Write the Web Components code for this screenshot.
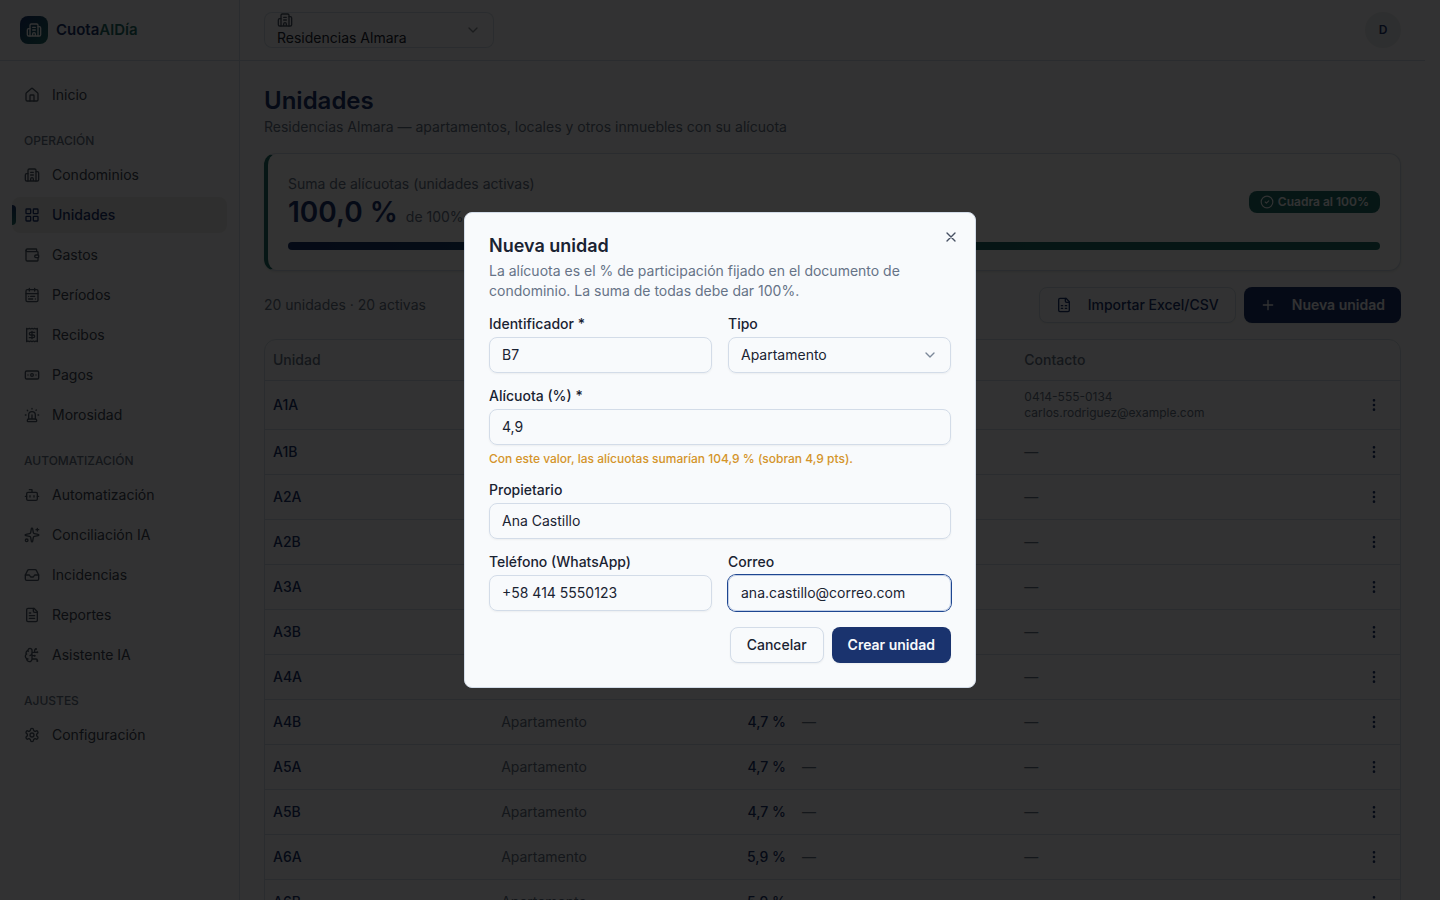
<!DOCTYPE html>
<html lang="es">
<head>
<meta charset="utf-8">
<meta name="viewport" content="width=device-width, initial-scale=1">
<title>CuotaAlDía · Unidades</title>
<style>
  :root {
    --bg: #fafbfc;
    --surface: #f8fafc;
    --ink: #1a2332;
    --muted: #667387;
    --line: #d3dce8;
    --navy: #1a336e;
    --teal: #1f6f69;
    --amber: #d4942a;
  }
  * { box-sizing: border-box; }
  html { background: var(--bg); }
  body {
    margin: 0;
    height: 100vh;
    overflow: hidden;
    font: 14px/20px Inter, "Noto Sans", sans-serif;
    color: var(--ink);
  }
</style>
</head>
<body>
<app-shell>
  <app-sidebar slot="sidebar"></app-sidebar>
  <app-topbar slot="topbar"></app-topbar>
  <units-page></units-page>
</app-shell>
<unit-dialog></unit-dialog>

<script>
const ICONS = {
  building: '<path d="M10 12h4M10 8h4M14 21v-3a2 2 0 0 0-4 0v3M6 10H4a2 2 0 0 0-2 2v7a2 2 0 0 0 2 2h16a2 2 0 0 0 2-2V9a2 2 0 0 0-2-2h-2"/><path d="M6 21V5a2 2 0 0 1 2-2h8a2 2 0 0 1 2 2v16"/>',
  home: '<path d="M15 21v-8a1 1 0 0 0-1-1h-4a1 1 0 0 0-1 1v8"/><path d="M3 10a2 2 0 0 1 .7-1.5l7-6a2 2 0 0 1 2.6 0l7 6A2 2 0 0 1 21 10v9a2 2 0 0 1-2 2H5a2 2 0 0 1-2-2z"/>',
  grid: '<rect x="3" y="3" width="7" height="7" rx="1"/><rect x="14" y="3" width="7" height="7" rx="1"/><rect x="14" y="14" width="7" height="7" rx="1"/><rect x="3" y="14" width="7" height="7" rx="1"/>',
  wallet: '<path d="M19 7V4a1 1 0 0 0-1-1H5a2 2 0 0 0 0 4h15a1 1 0 0 1 1 1v4h-3a2 2 0 0 0 0 4h3a1 1 0 0 0 1-1v-2a1 1 0 0 0-1-1"/><path d="M3 5v14a2 2 0 0 0 2 2h15a1 1 0 0 0 1-1v-4"/>',
  calendar: '<path d="M8 2v4M16 2v4M3 10h18M16 14h-6M13 18H7M7 14h.01M17 18h.01"/><rect x="3" y="4" width="18" height="18" rx="2"/>',
  receipt: '<path d="M4 2v20l2-1 2 1 2-1 2 1 2-1 2 1 2-1 2 1V2l-2 1-2-1-2 1-2-1-2 1-2-1-2 1Z"/><path d="M16 8h-6a2 2 0 1 0 0 4h4a2 2 0 1 1 0 4H8M12 17.500V6.500"/>',
  banknote: '<rect x="2" y="6" width="20" height="12" rx="2"/><circle cx="12" cy="12" r="2"/><path d="M6 12h.01M18 12h.01"/>',
  siren: '<path d="M7 18v-6a5 5 0 1 1 10 0v6"/><path d="M5 21a1 1 0 0 0 1 1h12a1 1 0 0 0 1-1v-1a2 2 0 0 0-2-2H7a2 2 0 0 0-2 2zM21 12h1M18.500 4.500 18 5M2 12h1M12 2v1M4.900 4.900l.7.7M12 12v6"/>',
  bot: '<path d="M12 8V4H8"/><rect x="4" y="8" width="16" height="12" rx="2"/><path d="M2 14h2M20 14h2M15 13v2M9 13v2"/>',
  sparkles: '<path d="M11 2.800a1 1 0 0 1 2 0l1 5.600a2 2 0 0 0 1.600 1.600l5.600 1a1 1 0 0 1 0 2l-5.600 1a2 2 0 0 0-1.600 1.600l-1 5.600a1 1 0 0 1-2 0l-1-5.600a2 2 0 0 0-1.600-1.600l-5.600-1a1 1 0 0 1 0-2l5.600-1A2 2 0 0 0 10 8.400zM20 2v4M22 4h-4"/><circle cx="4" cy="20" r="2"/>',
  inbox: '<path d="M22 12h-6l-2 3h-4l-2-3H2"/><path d="M5.450 5.110 2 12v6a2 2 0 0 0 2 2h16a2 2 0 0 0 2-2v-6l-3.450-6.890A2 2 0 0 0 16.760 4H7.240a2 2 0 0 0-1.790 1.110z"/>',
  file: '<path d="M15 2H6a2 2 0 0 0-2 2v16a2 2 0 0 0 2 2h12a2 2 0 0 0 2-2V7z"/><path d="M14 2v4a2 2 0 0 0 2 2h4M10 9H8M16 13H8M16 17H8"/>',
  brain: '<path d="M12 5a3 3 0 1 0-5.997.125 4 4 0 0 0-2.526 5.770 4 4 0 0 0 .556 6.588A4 4 0 1 0 12 18ZM9 13a4.500 4.500 0 0 0 3-4M6.003 5.125A3 3 0 0 0 6.401 6.500M3.477 10.896a4 4 0 0 1 .585-.396M6 18a4 4 0 0 1-1.967-.516M12 13h4M12 18h6a2 2 0 0 1 2 2v1M12 8h8M16 8V5a2 2 0 0 1 2-2"/><circle cx="16" cy="13" r=".5"/><circle cx="18" cy="3" r=".5"/><circle cx="20" cy="21" r=".5"/><circle cx="20" cy="8" r=".5"/>',
  settings: '<path d="M12.220 2h-.44a2 2 0 0 0-2 2v.18a2 2 0 0 1-1 1.730l-.43.25a2 2 0 0 1-2 0l-.15-.08a2 2 0 0 0-2.730.73l-.22.38a2 2 0 0 0 .73 2.730l.15.1a2 2 0 0 1 1 1.720v.51a2 2 0 0 1-1 1.740l-.15.09a2 2 0 0 0-.73 2.730l.22.38a2 2 0 0 0 2.730.73l.15-.08a2 2 0 0 1 2 0l.43.25a2 2 0 0 1 1 1.730V20a2 2 0 0 0 2 2h.44a2 2 0 0 0 2-2v-.18a2 2 0 0 1 1-1.730l.43-.25a2 2 0 0 1 2 0l.15.08a2 2 0 0 0 2.730-.73l.22-.39a2 2 0 0 0-.73-2.730l-.15-.08a2 2 0 0 1-1-1.740v-.5a2 2 0 0 1 1-1.740l.15-.09a2 2 0 0 0 .73-2.730l-.22-.38a2 2 0 0 0-2.730-.73l-.15.08a2 2 0 0 1-2 0l-.43-.25a2 2 0 0 1-1-1.730V4a2 2 0 0 0-2-2z"/><circle cx="12" cy="12" r="3"/>',
  sheet: '<path d="M15 2H6a2 2 0 0 0-2 2v16a2 2 0 0 0 2 2h12a2 2 0 0 0 2-2V7z"/><path d="M14 2v4a2 2 0 0 0 2 2h4M8 13h2M14 13h2M8 17h2M14 17h2"/>',
  plus: '<path d="M5 12h14M12 5v14"/>',
  check: '<circle cx="12" cy="12" r="10"/><path d="m9 12 2 2 4-4"/>',
  chevron: '<path d="m6 9 6 6 6-6"/>',
  close: '<path d="M18 6 6 18M6 6l12 12"/>',
  dots: '<circle cx="12" cy="12" r="1"/><circle cx="12" cy="5" r="1"/><circle cx="12" cy="19" r="1"/>'
};

const RESET = '*, *::before { box-sizing: border-box; } button, input, select { font: inherit; color: inherit; margin: 0; } h1, h2, p { margin: 0; }';

class Base extends HTMLElement {
  connectedCallback() {
    if (this.shadowRoot) return;
    this.attachShadow({ mode: 'open' }).innerHTML = `<style>${RESET}${this.styles()}</style>${this.markup()}`;
  }
  attr(name) { return this.getAttribute(name) || ''; }
}

customElements.define('ui-icon', class extends Base {
  styles() {
    return `:host { display: block; flex: none; width: 16px; height: 16px; }
      svg { display: block; width: 100%; height: 100%; fill: none; stroke: currentColor; stroke-width: 2; stroke-linecap: round; stroke-linejoin: round; }`;
  }
  markup() {
    return `<svg viewBox="0 0 24 24" aria-hidden="true">${ICONS[this.attr('name')]}</svg>`;
  }
});

customElements.define('ui-button', class extends Base {
  styles() {
    return `:host { display: block; }
      button { display: flex; align-items: center; gap: 16px; height: 36px; padding: 0 16px; border: 1px solid var(--line);
        border-radius: 8px; background: var(--surface); font-weight: 500; white-space: nowrap; box-shadow: 0 1px 2px rgb(0 0 0 / 5%); }
      :host([primary]) button { border: 0; background: var(--navy); color: #f8fafc; font-weight: 600; }`;
  }
  markup() {
    return `<button type="button"><slot name="icon"></slot><slot></slot></button>`;
  }
});

customElements.define('app-shell', class extends Base {
  styles() {
    return `:host { display: grid; grid-template-columns: 240px minmax(0, 1fr); min-height: 100vh; padding-right: 15px; }
      .side { border-right: 1px solid var(--line); }`;
  }
  markup() {
    return `<div class="side"><slot name="sidebar"></slot></div>
      <div><slot name="topbar"></slot><main><slot></slot></main></div>`;
  }
});

customElements.define('nav-item', class extends Base {
  styles() {
    return `:host { display: block; }
      a { position: relative; display: flex; align-items: center; gap: 12px; height: 36px; padding: 0 12px; border-radius: 8px;
        color: #3c4655; text-decoration: none; }
      ui-icon { color: #4c5868; }
      :host([current]) a { background: #ebebec; color: var(--navy); font-weight: 500; }
      :host([current]) ui-icon { color: var(--navy); }
      :host([current]) a::before { content: ""; position: absolute; left: 0; top: 8px; width: 4px; height: 20px;
        border-radius: 0 4px 4px 0; background: linear-gradient(var(--navy), var(--teal)); }`;
  }
  markup() {
    const current = this.hasAttribute('current') ? 'aria-current="page"' : '';
    return `<a href="#" ${current}><ui-icon name="${this.attr('icon')}"></ui-icon><slot></slot></a>`;
  }
});

customElements.define('app-sidebar', class extends Base {
  styles() {
    return `:host { display: block; }
      header { display: flex; align-items: center; gap: 8px; height: 61px; padding: 0 20px; border-bottom: 1px solid var(--line); }
      .logo { display: grid; place-items: center; width: 28px; height: 28px; border-radius: 8px; color: #fff;
        background: linear-gradient(135deg, var(--navy), var(--teal)); }
      strong { font-size: 15px; font-weight: 600; color: var(--navy); }
      strong span { color: var(--teal); }
      nav { display: grid; gap: 4px; padding: 16px 12px; }
      h2 { height: 36px; padding: 8px 12px 0; font-size: 12px; line-height: 32px; font-weight: 500; color: var(--muted); text-transform: uppercase; }`;
  }
  markup() {
    return `<header><span class="logo"><ui-icon name="building"></ui-icon></span><strong>Cuota<span>AlDía</span></strong></header>
      <nav aria-label="Principal">
        <nav-item icon="home">Inicio</nav-item>
        <h2>Operación</h2>
        <nav-item icon="building">Condominios</nav-item>
        <nav-item icon="grid" current>Unidades</nav-item>
        <nav-item icon="wallet">Gastos</nav-item>
        <nav-item icon="calendar">Períodos</nav-item>
        <nav-item icon="receipt">Recibos</nav-item>
        <nav-item icon="banknote">Pagos</nav-item>
        <nav-item icon="siren">Morosidad</nav-item>
        <h2>Automatización</h2>
        <nav-item icon="bot">Automatización</nav-item>
        <nav-item icon="sparkles">Conciliación IA</nav-item>
        <nav-item icon="inbox">Incidencias</nav-item>
        <nav-item icon="file">Reportes</nav-item>
        <nav-item icon="brain">Asistente IA</nav-item>
        <h2>Ajustes</h2>
        <nav-item icon="settings">Configuración</nav-item>
      </nav>`;
  }
});

customElements.define('app-topbar', class extends Base {
  styles() {
    return `:host { display: flex; align-items: center; justify-content: space-between; height: 61px; padding: 0 24px; border-bottom: 1px solid var(--line); }
      .picker { position: relative; width: 230px; height: 36px; padding: 0 13px; border-radius: 8px; box-shadow: inset 0 0 0 1px var(--line); }
      .picker > ui-icon:first-child { color: #4c5868; }
      select { display: block; width: 100%; height: 20px; padding: 0; border: 0; background: none; appearance: none; }
      .arrow { position: absolute; right: 13px; top: 10px; opacity: .5; }
      .avatar { width: 36px; height: 36px; padding: 0; border: 0; border-radius: 50%; background: #e6e9ee; color: var(--navy); font-size: 12px; font-weight: 600; }`;
  }
  markup() {
    return `<div class="picker"><ui-icon name="building"></ui-icon>
        <select aria-label="Condominio"><option>Residencias Almara</option></select>
        <ui-icon class="arrow" name="chevron"></ui-icon></div>
      <button class="avatar" type="button">D</button>`;
  }
});

customElements.define('summary-card', class extends Base {
  styles() {
    return `:host { display: grid; gap: 12px; padding: 20px; border: 1px solid var(--line); border-left: 4px solid var(--teal);
        border-radius: 12px; background: #fcfdfe; box-shadow: 0 1px 3px rgb(0 0 0 / 10%); }
      .row { display: flex; align-items: center; justify-content: space-between; }
      .label { color: var(--muted); }
      .value { display: flex; align-items: baseline; gap: 8px; height: 36px; line-height: 36px; color: var(--muted); }
      .value b { font-size: 28px; font-weight: 600; color: var(--navy); }
      .badge { display: flex; align-items: center; gap: 4px; height: 22px; padding: 0 11px; border-radius: 8px;
        background: var(--teal); color: #f8fafc; font-size: 12px; font-weight: 600; }
      .badge ui-icon { width: 14px; height: 14px; }
      .bar { height: 8px; border-radius: 4px; background: linear-gradient(90deg, var(--navy), var(--teal) 70%); }`;
  }
  markup() {
    return `<div class="row"><div><div class="label">Suma de alícuotas (unidades activas)</div>
        <div class="value"><b>100,0 %</b> de 100%</div></div>
        <span class="badge"><ui-icon name="check"></ui-icon>Cuadra al 100%</span></div>
      <div class="bar"></div>`;
  }
});

customElements.define('units-table', class extends Base {
  styles() {
    return `:host { display: block; border: 1px solid var(--line); border-radius: 12px; }
      table { width: 100%; border-collapse: separate; border-spacing: 0; table-layout: fixed; }
      th, td { padding: 8px; text-align: left; border-bottom: 1px solid var(--line); color: var(--muted); font-weight: 400; }
      thead th { height: 41px; padding: 0 8px; font-weight: 500; }
      tbody th, td.share { color: var(--navy); font-weight: 500; }
      .share { text-align: right; }
      td.contact { font-size: 12px; line-height: 16px; }
      td:last-child { text-align: right; }
      button { display: inline-grid; place-items: center; width: 36px; height: 28px; padding: 0; border: 0; background: none; color: var(--navy); vertical-align: top; }
      .unit { width: 20.1%; } .kind { width: 14%; } .part { width: 12.5%; } .owner { width: 19.6%; } .menu { width: 5%; }`;
  }
  markup() {
    const units = [['A1A', '4,7'], ['A1B', '4,7'], ['A2A', '4,7'], ['A2B', '4,7'], ['A3A', '4,7'], ['A3B', '4,7'], ['A4A', '4,7'],
      ['A4B', '4,7'], ['A5A', '4,7'], ['A5B', '4,7'], ['A6A', '5,9'], ['A6B', '5,9']];
    const rows = units.map(([id, share], i) => `<tr><th scope="row">${id}</th><td>Apartamento</td><td class="share">${share} %</td>
      <td>${i ? '—' : 'Carlos Rodríguez'}</td>${i ? '<td>—</td>' : '<td class="contact">0414-555-0134<br>carlos.rodriguez@example.com</td>'}
      <td><button type="button" aria-label="Acciones de ${id}"><ui-icon name="dots"></ui-icon></button></td></tr>`).join('');
    return `<table><colgroup><col class="unit"><col class="kind"><col class="part"><col class="owner"><col><col class="menu"></colgroup>
      <thead><tr><th>Unidad</th><th>Tipo</th><th class="share">Alícuota</th><th>Propietario</th><th>Contacto</th><th></th></tr></thead>
      <tbody>${rows}</tbody></table>`;
  }
});

customElements.define('units-page', class extends Base {
  styles() {
    return `:host { display: grid; gap: 16px; padding: 24px; }
      h1 { font-size: 24px; line-height: 32px; font-weight: 600; color: var(--navy); }
      p, .count { color: var(--muted); }
      .tools { display: flex; align-items: center; gap: 8px; }
      .count { margin-right: auto; }
      ui-button { color: var(--navy); }`;
  }
  markup() {
    return `<div><h1>Unidades</h1><p>Residencias Almara — apartamentos, locales y otros inmuebles con su alícuota</p></div>
      <summary-card></summary-card>
      <div class="tools"><span class="count">20 unidades · 20 activas</span>
        <ui-button><ui-icon slot="icon" name="sheet"></ui-icon>Importar Excel/CSV</ui-button>
        <ui-button primary><ui-icon slot="icon" name="plus"></ui-icon>Nueva unidad</ui-button></div>
      <units-table></units-table>`;
  }
});

customElements.define('ui-field', class extends Base {
  styles() {
    return `:host { display: grid; gap: 6px; align-content: start; }
      label { font-weight: 500; line-height: 14px; }
      .box { position: relative; }
      input, select { display: block; width: 100%; height: 36px; padding: 0 12px; border: 1px solid var(--line); border-radius: 8px;
        background: transparent; outline: 0; appearance: none; box-shadow: 0 1px 2px rgb(0 0 0 / 5%); }
      input { padding-bottom: 2px; }
      :host([active]) input, input:focus, select:focus { border-color: #c3d0e6; box-shadow: 0 0 0 1px #1e4691; }
      ui-icon { position: absolute; right: 13px; top: 10px; color: #7c8899; pointer-events: none; }
      .hint { font-size: 12px; line-height: 16px; font-weight: 500; color: var(--amber); }
      .hint:empty { display: none; }`;
  }
  markup() {
    const value = this.attr('value');
    const control = this.hasAttribute('options')
      ? `<select id="control"><option>${value}</option></select><ui-icon name="chevron"></ui-icon>`
      : `<input id="control" type="${this.attr('type') || 'text'}" value="${value}">`;
    return `<label for="control">${this.attr('label')}</label><div class="box">${control}</div><div class="hint">${this.attr('hint')}</div>`;
  }
});

customElements.define('unit-dialog', class extends Base {
  styles() {
    return `:host { position: fixed; inset: 0; display: grid; place-items: center; background: rgb(0 0 0 / 80%); }
      section { position: relative; display: grid; gap: 16px; width: 512px; max-width: 100%; padding: 24px; border: 1px solid var(--line);
        border-radius: 8px; background: var(--surface); }
      header { display: grid; gap: 6px; }
      h2 { font-size: 18px; line-height: 18px; font-weight: 600; }
      p { color: var(--muted); }
      .pair { display: grid; grid-template-columns: 1fr 1fr; gap: 16px; }
      form { display: grid; gap: 16px; }
      footer { display: flex; justify-content: flex-end; gap: 8px; }
      .close { position: absolute; top: 16px; right: 16px; padding: 0; border: 0; background: none; color: #465062; }`;
  }
  markup() {
    return `<section role="dialog" aria-modal="true" aria-labelledby="title">
      <header><h2 id="title">Nueva unidad</h2>
        <p>La alícuota es el % de participación fijado en el documento de condominio. La suma de todas debe dar 100%.</p></header>
      <form>
        <div class="pair"><ui-field label="Identificador *" value="B7"></ui-field><ui-field label="Tipo" value="Apartamento" options></ui-field></div>
        <ui-field label="Alícuota (%) *" value="4,9" hint="Con este valor, las alícuotas sumarían 104,9 % (sobran 4,9 pts)."></ui-field>
        <ui-field label="Propietario" value="Ana Castillo"></ui-field>
        <div class="pair"><ui-field label="Teléfono (WhatsApp)" type="tel" value="+58 414 5550123"></ui-field><ui-field label="Correo" type="email" value="ana.castillo@correo.com" active></ui-field></div>
        <footer><ui-button>Cancelar</ui-button><ui-button primary>Crear unidad</ui-button></footer>
      </form>
      <button class="close" type="button" aria-label="Cerrar"><ui-icon name="close"></ui-icon></button>
    </section>`;
  }
});
</script>
</body>
</html>
